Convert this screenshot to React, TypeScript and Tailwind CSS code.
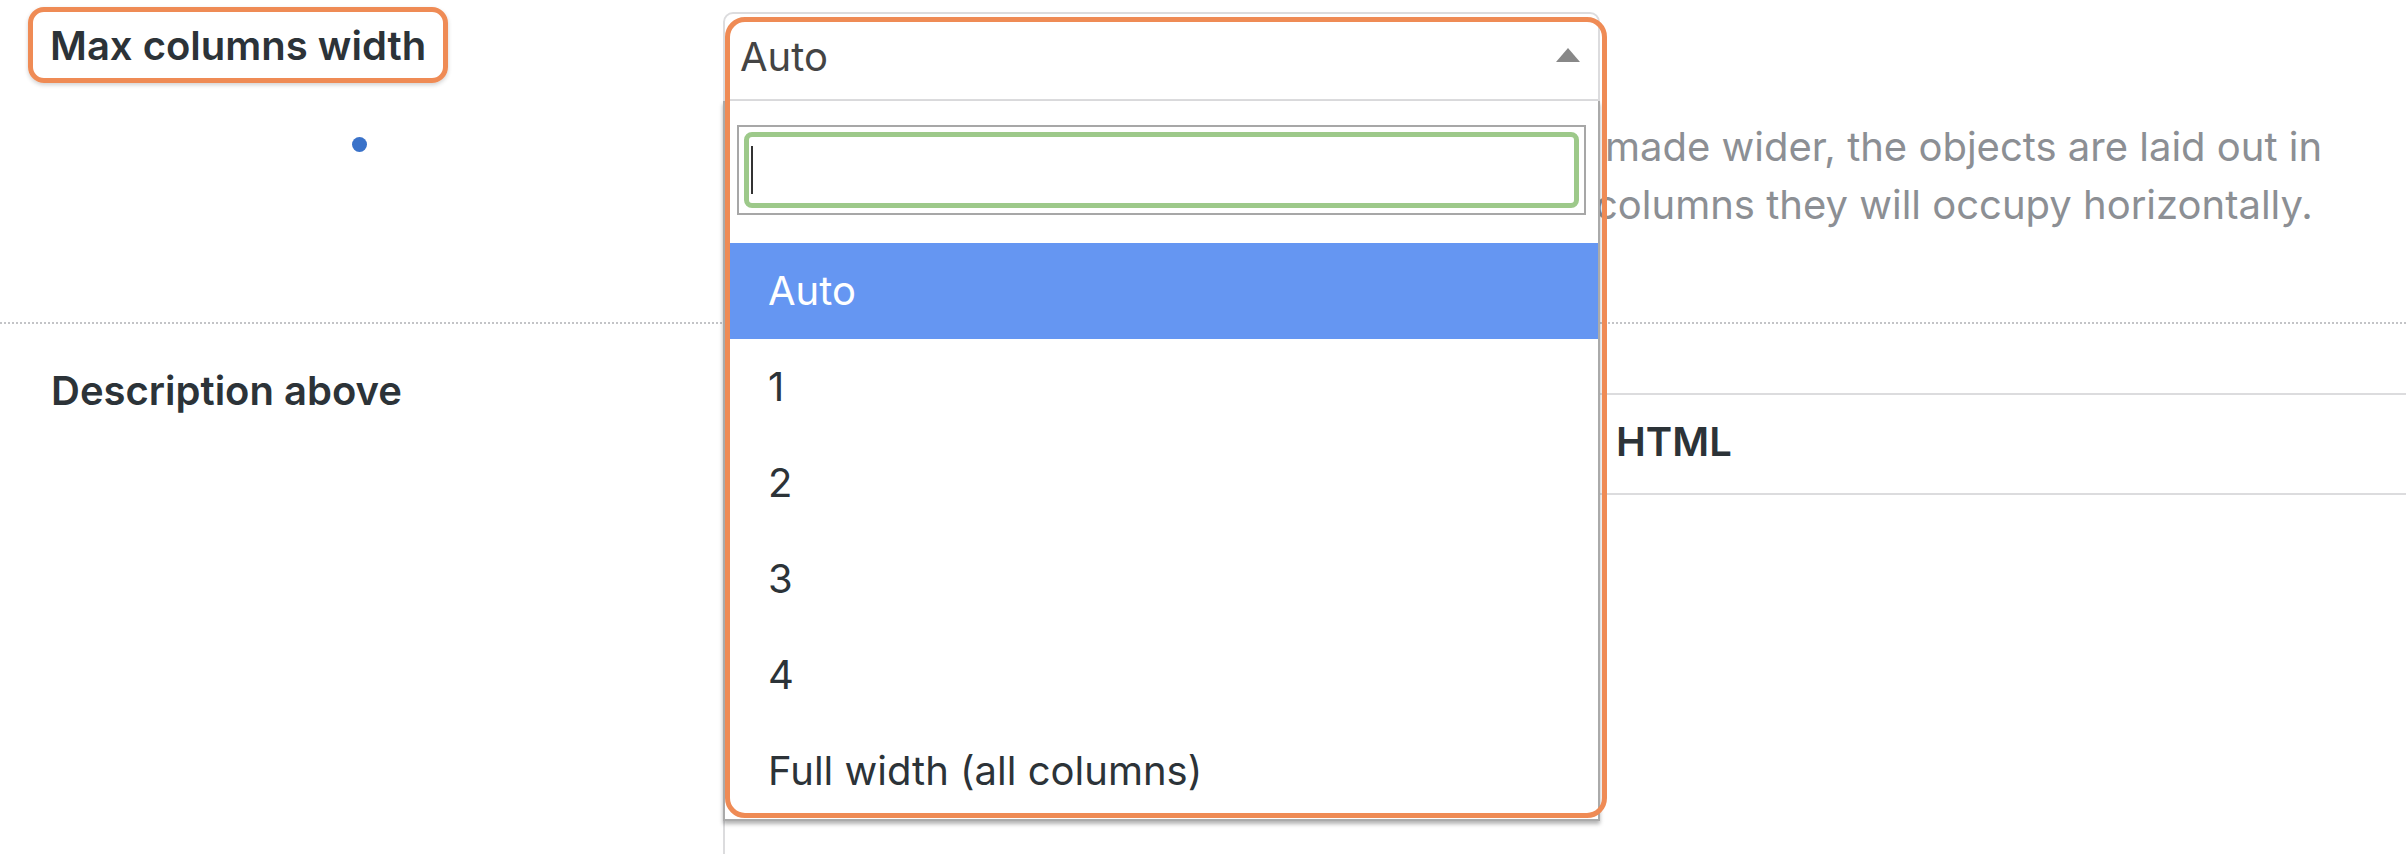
const options = ["Auto", "1", "2", "3", "4", "Full width (all columns)"];

export default function App() {
  return (
    <div className="h-[854px] w-full overflow-hidden bg-white font-['Inter',sans-serif] text-[#2c3338]">
      {/* Max columns width row */}
      <div className="grid h-[324px] grid-cols-[723px_1fr] border-b-2 border-dotted border-[#c3c4c7]">
        <div className="flex flex-col items-start">
          <div className="ml-[28px] mt-[7px] rounded-[16px] border-[5px] border-[#ef8b55] pb-[8px] pl-[17px] pr-[17px] pt-[10px] text-[40px] font-semibold leading-[48px] shadow-[0_2px_4px_rgba(0,0,0,0.18)]">
            Max columns width
          </div>
          <span className="ml-[352px] mt-[54px] h-[15px] w-[15px] rounded-full bg-[#3a72c9]" />
        </div>

        <div className="relative">
          {/* select header */}
          <div className="mt-[12px] flex h-[89px] w-[877px] items-center justify-between rounded-t-[10px] border-2 border-[#dcdcde] pl-[15px] pr-[18px]">
            <span className="text-[40px] leading-[48px] text-[#444]">Auto</span>
            <svg width="24" height="14" viewBox="0 0 24 14" className="mb-[4px]">
              <path d="M12 0 L24 14 L0 14 Z" fill="#888" />
            </svg>
          </div>

          <div className="mt-[17px] text-[40px] leading-[58px] text-[#8c8f94]">
            <p className="pl-[882px]">made wider, the objects are laid out in</p>
            <p className="pl-[872px]">columns they will occupy horizontally.</p>
          </div>

          {/* dropdown panel */}
          <div className="absolute left-0 top-[101px] z-10 w-[877px] border-2 border-t-0 border-[#aaa] bg-white shadow-[0_3px_4px_rgba(0,0,0,0.3)]">
            <div className="px-[12px] pb-[28px] pt-[24px]">
              <div className="h-[90px] border-2 border-[#a7a7a7] p-[5px]">
                <div className="flex h-full items-center rounded-[8px] border-[5px] border-[#9dc98a] pl-[2px]">
                  <span className="h-[48px] w-[2px] bg-[#333]" />
                </div>
              </div>
            </div>
            {options.map((o, i) => (
              <div
                key={o}
                className={
                  i === 0
                    ? "flex h-[96px] items-center bg-[#6596f2] pl-[43px] text-[40px] leading-[48px] text-white"
                    : "flex h-[96px] items-center pl-[43px] text-[40px] leading-[48px] text-[#2c3338]"
                }
              >
                {o}
              </div>
            ))}
          </div>

          {/* annotation outline */}
          <div className="pointer-events-none absolute left-[2px] top-[17px] z-20 h-[801px] w-[882px] rounded-[20px] border-[5px] border-[#ef8b55]" />
        </div>
      </div>

      {/* Description above row */}
      <div className="grid grid-cols-[723px_1fr]">
        <div className="pl-[51px] pt-[43px] text-[40px] font-semibold leading-[48px]">Description above</div>
        <div className="pt-[69px]">
          <div className="h-[461px] border-l-2 border-t-2 border-[#dcdcde]">
            <div className="flex h-[100px] items-center border-b-2 border-[#dcdcde] pb-[4px]">
              <div className="w-[878px]" />
              <span className="pl-[13px] text-[40px] font-semibold leading-[48px]">HTML</span>
            </div>
          </div>
        </div>
      </div>
    </div>
  );
}
